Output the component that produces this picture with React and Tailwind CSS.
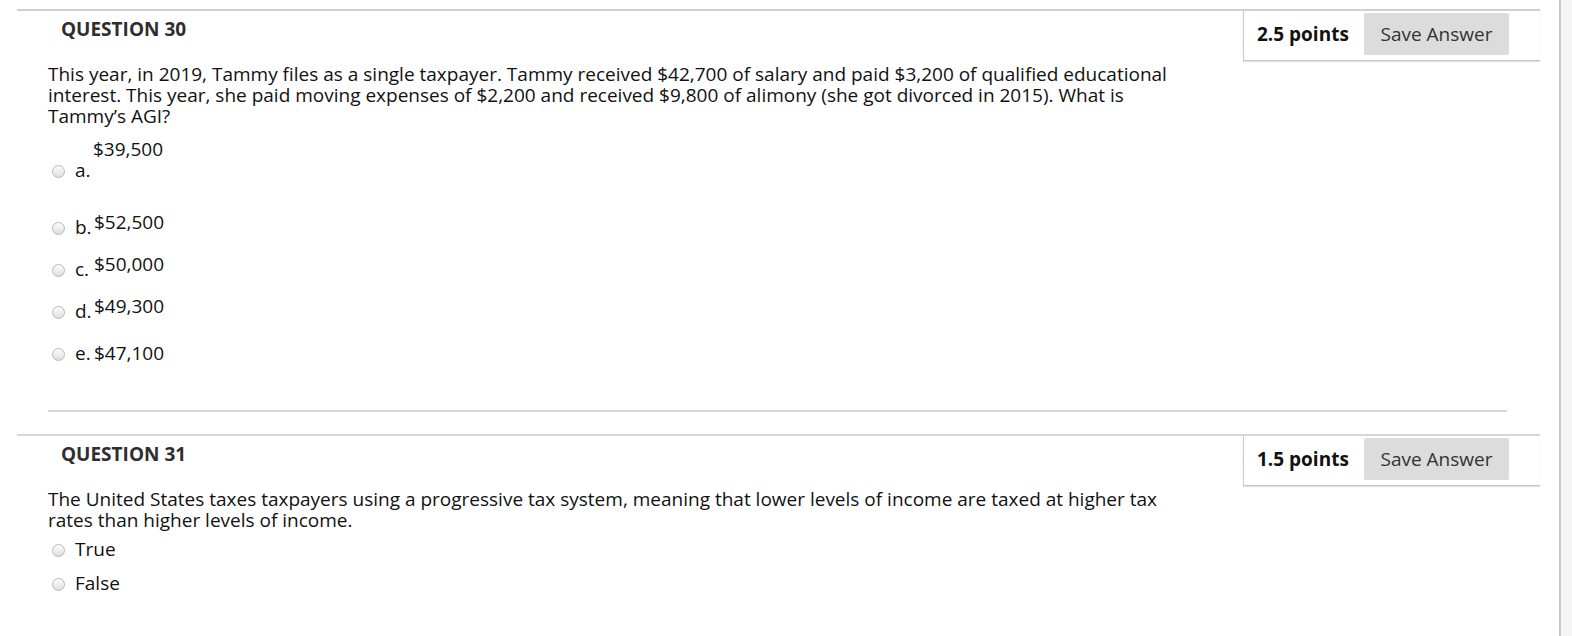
import React from 'react';

const QUESTIONS = [
  {
    id: 30,
    points: '2.5 points',
    text: 'This year, in 2019, Tammy files as a single taxpayer. Tammy received $42,700 of salary and paid $3,200 of qualified educational interest. This year, she paid moving expenses of $2,200 and received $9,800 of alimony (she got divorced in 2015). What is Tammy\u2019s AGI?',
  },
  {
    id: 31,
    points: '1.5 points',
    text: 'The United States taxes taxpayers using a progressive tax system, meaning that lower levels of income are taxed at higher tax rates than higher levels of income.',
  },
];

const CHOICES = [
  { letter: 'b.', value: '$52,500', raised: true },
  { letter: 'c.', value: '$50,000', raised: true },
  { letter: 'd.', value: '$49,300', raised: true },
  { letter: 'e.', value: '$47,100', raised: false },
];

function Radio() {
  return (
    <span className="block w-[13px] h-[13px] rounded-full border border-[#b9b9b9] bg-gradient-to-b from-[#fdfdfd] to-[#dedede]" />
  );
}

function PointsBox({ points }) {
  return (
    <div className="w-[297px] h-[50px] shrink-0 border-l border-b border-[#c9c9c9] shadow-[0_1px_1px_rgba(0,0,0,0.12)] flex items-start pt-[2px] pl-[13px]">
      <div className="w-[107px] h-[42px] flex items-center font-bold text-[#111]">{points}</div>
      <button className="w-[145px] h-[42px] bg-[#dcdcdc] rounded-[2px] text-[#333]">Save Answer</button>
    </div>
  );
}

function Header({ q }) {
  return (
    <div className="flex">
      <div className="flex-1 min-w-0">
        <div className="pl-[44px] pt-[6px] leading-[24px] font-bold text-[#2e2e2e]">QUESTION {q.id}</div>
        <p className="ml-[31px] mt-[23px] w-[1150px] leading-[21px] text-[#111]">{q.text}</p>
      </div>
      <PointsBox points={q.points} />
    </div>
  );
}

export default function App() {
  return (
    <div className="flex h-[636px] w-full bg-white text-[19px] font-['Open_Sans',sans-serif]">
      <div className="flex-1 pl-[17px] pt-[9px]">
        <div className="w-[1523px] border-t-2 border-[#d0d0d0]">
          <Header q={QUESTIONS[0]} />
          <div className="leading-[21px] text-[#111]">
            <div className="pl-[76px] mt-[12px]">$39,500</div>
            <div className="flex items-center pl-[35px]">
              <span className="mt-[2px]"><Radio /></span>
              <span className="ml-[10px]">a.</span>
            </div>
            <div className="mt-[36px] flex flex-col gap-[21px]">
              {CHOICES.map(c => (
                <div key={c.letter} className="h-[21px] flex items-end pl-[35px]">
                  <span className="h-[21px] flex items-center pt-[2px]"><Radio /></span>
                  <span className="ml-[10px] w-[19px]">{c.letter}</span>
                  <span className={c.raised ? 'mb-[5px]' : ''}>{c.value}</span>
                </div>
              ))}
            </div>
          </div>
          <div className="ml-[31px] mt-[46px] w-[1459px] h-[2px] bg-[#d6d6d6]" />
        </div>

        <div className="w-[1523px] mt-[22px] border-t-2 border-[#d6d6d6]">
          <Header q={QUESTIONS[1]} />
          <div className="leading-[21px] text-[#111] mt-[8px] flex flex-col gap-[13px]">
            {['True', 'False'].map(v => (
              <div key={v} className="flex items-center pl-[35px]">
                <span className="pt-[2px]"><Radio /></span>
                <span className="ml-[10px]">{v}</span>
              </div>
            ))}
          </div>
        </div>
      </div>
      <div className="w-[13px] shrink-0 border-l-2 border-[#c9c9c9] bg-[#f5f5f5]" />
    </div>
  );
}
